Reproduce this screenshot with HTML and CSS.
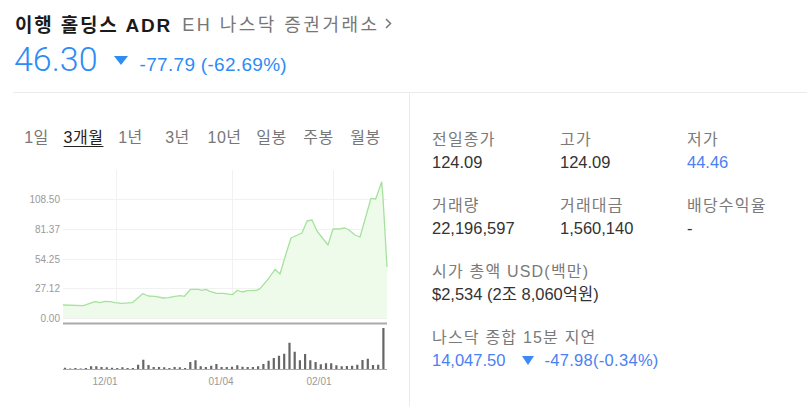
FILE: index.html
```html
<!DOCTYPE html>
<html lang="ko">
<head>
    <meta charset="UTF-8">
    <meta name="viewport" content="width=device-width, initial-scale=1.0">
    <title>이행 홀딩스 ADR - 시세</title>
    <link rel="stylesheet" href="styles.css">
</head>
<body>
    <div class="quote-head">
        <div class="title-row">
            <h1 class="title">이행 홀딩스 ADR</h1>
            <span class="exch">EH 나스닥 증권거래소</span>
            <svg class="chev" width="7" height="11" viewBox="0 0 7 11"><polyline points="1,1 5.5,5.5 1,10" fill="none" stroke="#777" stroke-width="1.5"/></svg>
        </div>
        <div class="price-row">
            <span class="price">46.30</span>
            <span class="arrow"></span>
            <span class="change">-77.79 (-62.69%)</span>
        </div>
    </div>

    <div class="main">
        <div class="chart-col">
            <div class="tabs">
                <span>1일</span>
                <span class="active">3개월</span>
                <span>1년</span>
                <span>3년</span>
                <span>10년</span>
                <span>일봉</span>
                <span>주봉</span>
                <span>월봉</span>
            </div>
            <svg class="chart" width="396" height="240" viewBox="13 160 396 240">
                <!-- grid -->
                <g stroke="#f1f1f1" stroke-width="1">
                    <line x1="116.5" y1="170" x2="116.5" y2="318"/>
                    <line x1="232.5" y1="170" x2="232.5" y2="318"/>
                    <line x1="333.5" y1="170" x2="333.5" y2="318"/>
                    <line x1="63" y1="199.5" x2="387" y2="199.5"/>
                    <line x1="63" y1="229.5" x2="387" y2="229.5"/>
                    <line x1="63" y1="259.5" x2="387" y2="259.5"/>
                    <line x1="63" y1="288.5" x2="387" y2="288.5"/>
                    <line x1="63" y1="318.5" x2="387" y2="318.5"/>
                </g>
                <g class="axis-label" text-anchor="end">
                    <text x="60" y="203">108.50</text>
                    <text x="60" y="233">81.37</text>
                    <text x="60" y="263">54.25</text>
                    <text x="60" y="292">27.12</text>
                    <text x="60" y="322">0.00</text>
                </g>
                <!-- price -->
                <polygon fill="#effbea" points="63,305 83.3,305.7 95,301.7 100,302.7 105,301.3 110,301.7 115,302.7 121.7,303.3 132.3,302.7 142.7,293.7 148.3,296 155,296.3 163.3,298 168.3,297.7 175,296.3 180,295.7 184.3,296.3 190.7,289.3 198.3,289.3 201.7,290.3 205.7,289.3 210,291.3 216.7,293.3 223.3,293.3 232.3,294.7 237.3,290.3 242.3,292 247.3,290.7 256.7,290.3 260,288.7 268.3,279 275,269.3 280,274 285,257 291,238 302,233 307,221 312,220 317,231 328,245 333,229 339,229 345,228 349,230 355,235 360,237 371,198.3 375.7,199 381.7,182 383,198 387,267 387,318 63,318"/>
                <polyline fill="none" stroke="#a6e29e" stroke-width="1.3" stroke-linejoin="round" points="63,305 83.3,305.7 95,301.7 100,302.7 105,301.3 110,301.7 115,302.7 121.7,303.3 132.3,302.7 142.7,293.7 148.3,296 155,296.3 163.3,298 168.3,297.7 175,296.3 180,295.7 184.3,296.3 190.7,289.3 198.3,289.3 201.7,290.3 205.7,289.3 210,291.3 216.7,293.3 223.3,293.3 232.3,294.7 237.3,290.3 242.3,292 247.3,290.7 256.7,290.3 260,288.7 268.3,279 275,269.3 280,274 285,257 291,238 302,233 307,221 312,220 317,231 328,245 333,229 339,229 345,228 349,230 355,235 360,237 371,198.3 375.7,199 381.7,182 383,198 387,267"/>
                <line x1="63" y1="323.5" x2="387" y2="323.5" stroke="#aaa" stroke-width="2"/>
                <!-- volume -->
                <path fill="none" stroke="#666" stroke-width="2.2" d="M65 369v-1.3M70.2 369v-0.6M75.4 369v-1M80.7 369v-0.6M85.9 369v-1M91.1 369v-2.7M96.3 369v-2.7M101.5 369v-2M106.8 369v-1.7M112 369v-1.3M117.2 369v-1M122.4 369v-1.7M127.6 369v-1M132.9 369v-1M138.1 369v-4.3M143.3 369v-9.3M148.5 369v-4M153.7 369v-2M159 369v-2M164.2 369v-1.7M169.4 369v-1M174.6 369v-2M179.8 369v-1.7M185.1 369v-1M190.3 369v-7M195.5 369v-8.7M200.7 369v-2.7M205.9 369v-2M211.2 369v-3.3M216.4 369v-5M221.6 369v-2M226.8 369v-2M232 369v-2.3M237.3 369v-3.7M242.5 369v-2.3M247.7 369v-2M252.9 369v-2M258.1 369v-2.7M263.4 369v-5M268.6 369v-8.3M273.8 369v-11M279 369v-13.3M284.2 369v-15.3M289.5 369v-26.3M294.7 369v-17.3M299.9 369v-8.7M305.1 369v-15M310.3 369v-8.7M315.6 369v-7M320.8 369v-4.7M326 369v-5.7M331.2 369v-5.7M336.4 369v-3.7M341.7 369v-2.7M346.9 369v-3M352.1 369v-3.3M357.3 369v-4.3M362.5 369v-9M367.8 369v-10.3M373 369v-4M378.2 369v-4.3M383.4 369v-41"/>
                <line x1="63" y1="369.5" x2="387" y2="369.5" stroke="#aaa" stroke-width="1"/>
                <g class="axis-label" text-anchor="middle">
                    <text x="105" y="385">12/01</text>
                    <text x="221" y="385">01/04</text>
                    <text x="319" y="385">02/01</text>
                </g>
            </svg>
        </div>

        <div class="stats">
            <div class="stat">
                <div class="label">전일종가</div>
                <div class="value">124.09</div>
            </div>
            <div class="stat">
                <div class="label">고가</div>
                <div class="value">124.09</div>
            </div>
            <div class="stat">
                <div class="label">저가</div>
                <div class="value low">44.46</div>
            </div>
            <div class="stat">
                <div class="label">거래량</div>
                <div class="value">22,196,597</div>
            </div>
            <div class="stat">
                <div class="label">거래대금</div>
                <div class="value">1,560,140</div>
            </div>
            <div class="stat">
                <div class="label">배당수익율</div>
                <div class="value">-</div>
            </div>
            <div class="stat wide">
                <div class="label">시가 총액 USD(백만)</div>
                <div class="value">$2,534 (2조 8,060억원)</div>
            </div>
            <div class="stat wide">
                <div class="label">나스닥 종합 15분 지연</div>
                <div class="value index">
                    <span>14,047.50</span>
                    <span class="arrow small"></span>
                    <span class="idx-change">-47.98(-0.34%)</span>
                </div>
            </div>
        </div>
    </div>
</body>
</html>
```

FILE: styles.css
```css
* {
    box-sizing: border-box;
}
body {
    margin: 0;
    width: 807px;
    height: 406px;
    overflow: hidden;
    background-color: #fff;
    color: #333;
    font-family: "Liberation Sans", "Noto Sans CJK KR", sans-serif;
}
.quote-head {
    height: 92px;
    padding: 11px 0 0 15px;
}
.title-row {
    display: flex;
    align-items: center;
    height: 24px;
}
.title {
    margin: 0;
    font-size: 19px;
    font-weight: bold;
    letter-spacing: 1.8px;
    color: #1a1a1a;
}
.exch {
    margin-left: 10px;
    font-size: 18px;
    letter-spacing: 2.5px;
    color: #777;
}
.chev {
    margin-left: 5px;
}
.price-row {
    display: flex;
    align-items: baseline;
    height: 40px;
    margin-top: 4px;
    color: #2e8cf5;
}
.price {
    margin-left: -1px;
    font-family: Roboto, "Liberation Sans", sans-serif;
    font-weight: 300;
    font-size: 34px;
    line-height: 40px;
}
.arrow {
    align-self: center;
    margin: 2px 12px 0 16px;
    width: 0;
    height: 0;
    border-left: 7px solid transparent;
    border-right: 7px solid transparent;
    border-top: 9px solid #2e8cf5;
}
.change {
    font-size: 19px;
    letter-spacing: 0.3px;
}
.main {
    display: flex;
    height: 314px;
    margin-left: 13px;
    border-top: 1px solid #ebebeb;
}
.chart-col {
    width: 397px;
    border-right: 1px solid #ebebeb;
}
.tabs {
    display: grid;
    grid-template-columns: repeat(8, 47px);
    padding-top: 34px;
    font-size: 16px;
    line-height: 22px;
    letter-spacing: 0.5px;
    color: #777;
    text-align: center;
}
.tabs .active {
    color: #222;
    text-decoration: underline;
    text-underline-offset: 3px;
}
.chart {
    display: block;
    margin-top: 11px;
}
.axis-label {
    font-family: "Liberation Sans", sans-serif;
    font-size: 10px;
    fill: #999;
}
.stats {
    flex: 1;
    display: grid;
    grid-template-columns: 128px 127px 1fr;
    grid-auto-rows: 46px;
    row-gap: 20px;
    align-content: start;
    padding: 35px 0 0 22px;
}
.stat.wide {
    grid-column: 1 / -1;
}
.label {
    font-size: 16px;
    line-height: 23px;
    letter-spacing: 1.2px;
    color: #7a7a7a;
}
.value {
    font-size: 16.5px;
    line-height: 23px;
    color: #333;
}
.value.low {
    color: #4a80f5;
}
.value.index {
    display: flex;
    align-items: center;
    color: #4a80f5;
}
.arrow.small {
    margin: 0 10px 0 17px;
    border-left-width: 6px;
    border-right-width: 6px;
    border-top: 9px solid #3d8af5;
}
.idx-change {
    letter-spacing: 0.3px;
}
```
